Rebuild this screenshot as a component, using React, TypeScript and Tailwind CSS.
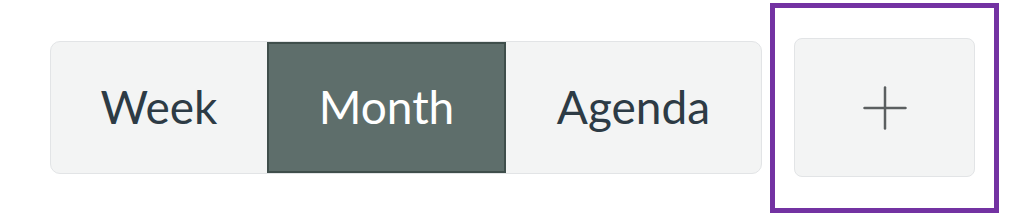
const views = [
  { label: "Week", width: "w-[216px]" },
  { label: "Month", width: "w-[239px]" },
  { label: "Agenda", width: "w-[255px]" },
];

export default function App() {
  const active = "Month";

  return (
    <div
      className="flex h-[215px] w-[1024px] items-center bg-white pl-[50px]"
      style={{ fontFamily: "Lato, 'Liberation Sans', sans-serif" }}
    >
      <div className="flex h-[133px] overflow-hidden rounded-[10px] border border-[#e2e4e6] bg-[#f3f4f4]">
        {views.map((v) =>
          v.label === active ? (
            <button
              key={v.label}
              className={`${v.width} flex items-center justify-center border-2 border-[#3f4e4b] bg-[#5e6e6b] pb-[2px] text-[46px] text-white`}
            >
              {v.label}
            </button>
          ) : (
            <button
              key={v.label}
              className={`${v.width} flex items-center justify-center pb-[2px] text-[46px] text-[#2d3b45]`}
            >
              {v.label}
            </button>
          )
        )}
      </div>
      <div className="ml-[8px] flex h-[210px] w-[229px] items-center justify-center border-[5px] border-[#7332a2]">
        <button className="flex h-[139px] w-[181px] items-center justify-center rounded-[8px] border border-[#e2e4e6] bg-[#f3f4f4]">
          <svg width="44" height="44" viewBox="0 0 44 44" fill="none" stroke="#5b5f60" strokeWidth="2.5" strokeLinecap="round">
            <line x1="22" y1="1.5" x2="22" y2="42.5" />
            <line x1="1.5" y1="22" x2="42.5" y2="22" />
          </svg>
        </button>
      </div>
    </div>
  );
}
